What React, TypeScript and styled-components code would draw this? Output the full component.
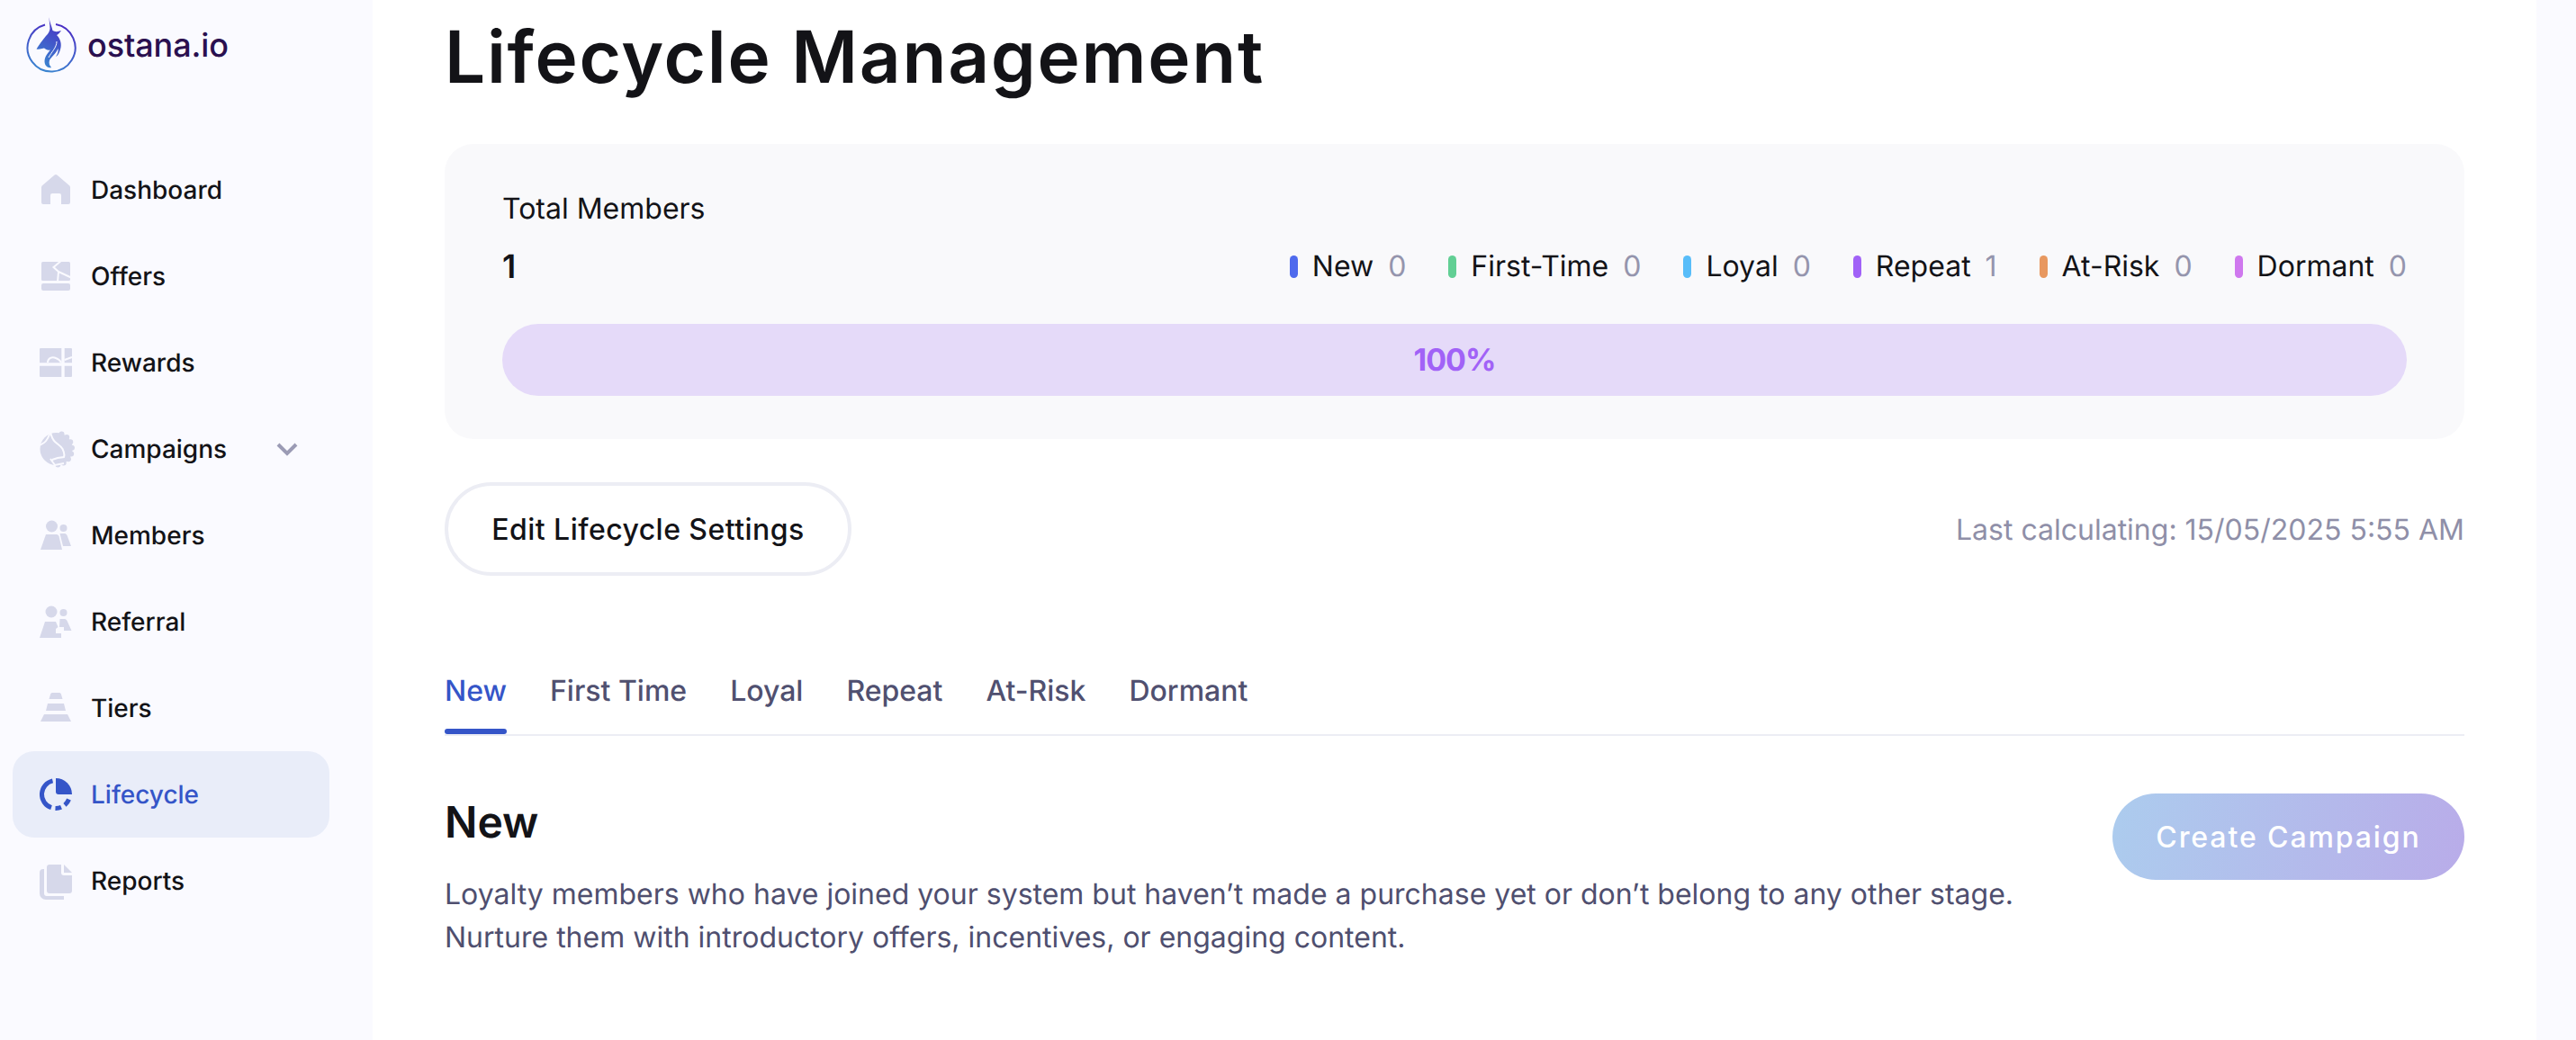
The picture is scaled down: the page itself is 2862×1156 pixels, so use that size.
import React from 'react';
import styled, { createGlobalStyle } from 'styled-components';

const GlobalStyle = createGlobalStyle`
  html, body {
    margin: 0;
    padding: 0;
    background: #fafaff;
    font-family: 'Inter', 'Liberation Sans', sans-serif;
    color: #131317;
    text-rendering: geometricPrecision;
  }
  * {
    box-sizing: border-box;
  }
`;

const Page = styled.div`
  display: flex;
  width: 2862px;
  height: 1156px;
  overflow: hidden;
  background: #fafaff;
`;

const Sidebar = styled.aside`
  flex: 0 0 414px;
  padding: 17px 0 0 14px;
`;

const Logo = styled.div`
  display: flex;
  align-items: flex-start;
  gap: 12px;
  height: 146px;
  padding-left: 15px;
`;

const LogoText = styled.span`
  margin-top: 10px;
  font-size: 36px;
  line-height: 46px;
  font-weight: 500;
  letter-spacing: -0.1px;
  color: #2a1050;
`;

const NavRow = styled.div<{ $active?: boolean }>`
  display: flex;
  align-items: center;
  gap: 21px;
  width: 352px;
  height: 96px;
  padding-left: 30px;
  border-radius: 24px;
  font-size: 28px;
  font-weight: 500;
  background: ${(p) => (p.$active ? '#e9edf9' : 'transparent')};
  color: ${(p) => (p.$active ? '#3555c8' : '#131317')};
`;

const NavIcon = styled.svg<{ $active?: boolean }>`
  flex: 0 0 36px;
  width: 36px;
  height: 36px;
  overflow: visible;
  fill: ${(p) => (p.$active ? '#3555c8' : '#d6d8ea')};
`;

const NavLabel = styled.span`
  line-height: 36px;
`;

const Chevron = styled.svg`
  width: 24px;
  height: 16px;
  margin-left: 34px;
  fill: none;
  stroke: #9b9bb5;
  stroke-width: 4;
`;

const Cut = styled.path`
  fill: none;
  stroke: #fafaff;
  stroke-width: 2;
`;

const Main = styled.main`
  flex: 0 0 2404px;
  padding: 8px 80px 0;
  background: #fff;
`;

const Title = styled.h1`
  margin: 0;
  font-size: 80px;
  line-height: 112px;
  font-weight: 600;
  letter-spacing: 1.7px;
  color: #131317;
`;

const SummaryCard = styled.section`
  margin-top: 40px;
  padding: 48px 64px;
  height: 328px;
  border-radius: 32px;
  background: #f9f9fb;
`;

const TotalLabel = styled.div`
  font-size: 32px;
  line-height: 48px;
`;

const TotalRow = styled.div`
  display: flex;
  align-items: center;
  justify-content: space-between;
  height: 48px;
  margin-top: 16px;
`;

const TotalValue = styled.div`
  font-size: 36px;
  font-weight: 600;
`;

const Legend = styled.div`
  display: flex;
  gap: 47px;
`;

const LegendItem = styled.div`
  display: flex;
  align-items: center;
  gap: 16px;
  font-size: 32px;
  line-height: 48px;
`;

const LegendMark = styled.i<{ $color: string }>`
  width: 9px;
  height: 25px;
  border-radius: 5px;
  background: ${(p) => p.$color};
`;

const LegendCount = styled.span`
  color: #9595ad;
`;

const Bar = styled.div`
  display: flex;
  align-items: center;
  justify-content: center;
  height: 80px;
  margin-top: 40px;
  border-radius: 40px;
  background: #e5daf9;
  font-size: 34px;
  font-weight: 700;
  letter-spacing: -1px;
  color: #a162f7;
`;

const Actions = styled.div`
  display: flex;
  align-items: center;
  justify-content: space-between;
  margin-top: 48px;
`;

const OutlineButton = styled.button`
  width: 452px;
  height: 104px;
  border: 4px solid #ecedf4;
  border-radius: 52px;
  background: #fff;
  font-family: inherit;
  font-size: 32px;
  font-weight: 500;
  letter-spacing: 0.45px;
  color: #131317;
`;

const Calculated = styled.span`
  font-size: 32px;
  color: #8f8fa8;
`;

const Tabs = styled.nav`
  display: flex;
  gap: 48px;
  height: 98px;
  margin-top: 80px;
  padding-top: 24px;
  border-bottom: 2px solid #ecedf4;
`;

const Tab = styled.div<{ $active?: boolean }>`
  position: relative;
  height: 72px;
  font-size: 32px;
  font-weight: 500;
  line-height: 48px;
  color: ${(p) => (p.$active ? '#3555c8' : '#505070')};

  ${(p) =>
    p.$active &&
    `&::after {
      content: '';
      position: absolute;
      left: 0;
      right: 0;
      bottom: 0;
      height: 6px;
      border-radius: 3px;
      background: #3555c8;
    }`}
`;

const Stage = styled.section`
  display: flex;
  align-items: flex-start;
  justify-content: space-between;
  margin-top: 64px;
`;

const StageHeading = styled.h2`
  margin: 0;
  font-size: 48px;
  line-height: 64px;
  font-weight: 600;
`;

const StageText = styled.p`
  margin: 24px 0 0;
  font-size: 32px;
  line-height: 48px;
  color: #4f4f6f;
`;

const PrimaryButton = styled.button`
  width: 391px;
  height: 96px;
  border: 0;
  border-radius: 48px;
  background: linear-gradient(100deg, #acccee 0%, #b9ace9 100%);
  font-family: inherit;
  font-size: 32px;
  font-weight: 500;
  letter-spacing: 1.9px;
  color: #fff;
`;

const LogoMark = () => (
  <svg width="56" height="64" viewBox="0 0 56 64" style={{ flex: '0 0 56px' }}>
    <defs>
      <linearGradient id="logoFill" x1="0.6" y1="0" x2="0.3" y2="1">
        <stop offset="0" stopColor="#4a2fc4" />
        <stop offset="1" stopColor="#3a86d0" />
      </linearGradient>
    </defs>
    <path
      d="M33 10A26.500 26.500 0 1 1 21 10.500"
      fill="none"
      stroke="url(#logoFill)"
      strokeWidth="2"
    />
    <path
      fill="url(#logoFill)"
      d="M26 0C25 6 28 10 29.500 17C32 18.500 35 18.500 39 17C37 20 35 21.500 34 22C38 26 40 32 38 38C37 42 35 45 33 46C35 43 36 40 35.500 37C33 43 28 46 26 50C25 53 26 56 28 58C24 59 20.500 56 20.500 51C20.500 46 24 42 27 38.500C24 39.500 22 38 20 36.500C17 37.500 14 38 11.500 37.500C14 33 19 27 22 23C25 20 26 18 26.500 15C26.500 10 25 5 26 0Z"
    />
    <path d="M34 29C34 36 28 41 25 47" fill="none" stroke="#fafaff" strokeWidth="1" />
  </svg>
);

// little bumps along the right side of the campaigns badge
const badgeBumps = [-70, -48, -26, -4, 18, 40, 62, 84];

const navItems: { label: string; active?: boolean; chevron?: boolean; icon: React.ReactNode }[] = [
  {
    label: 'Dashboard',
    icon: (
      <path d="M16.600 1.600a2 2 0 0 1 2.800 0l12.800 11a3 3 0 0 1 1.800 3V32a2 2 0 0 1-2 2H24V24a2 2 0 0 0-2-2h-8a2 2 0 0 0-2 2v10H4a2 2 0 0 1-2-2V15.600a3 3 0 0 1 1.800-3z" />
    ),
  },
  {
    label: 'Offers',
    icon: (
      <>
        <rect x="2" y="2" width="32" height="21" rx="1.500" />
        <rect x="2" y="26" width="32" height="8" rx="2" />
        <Cut d="M25 0L15.500 8L21 13L20 24M21 13L36 20" />
      </>
    ),
  },
  {
    label: 'Rewards',
    icon: (
      <>
        <path d="M1 2H24.300V18.300H0V3a1 1 0 0 1 1-1z" />
        <path d="M27.700 2H35a1 1 0 0 1 1 1V18.300H27.700z" />
        <path d="M0 21.700H24.300V34H1a1 1 0 0 1-1-1z" />
        <path d="M27.700 21.700H36V33a1 1 0 0 1-1 1H27.700z" />
        <Cut d="M9 18C9 13 14 11 18 13C21 14 23 16 24 18M27.700 15L36 12" />
      </>
    ),
  },
  {
    label: 'Campaigns',
    chevron: true,
    icon: (
      <>
        <circle cx="18.500" cy="18" r="18" />
        {badgeBumps.map((deg) => (
          <circle
            key={deg}
            cx={18.5 + 17.5 * Math.cos((deg * Math.PI) / 180)}
            cy={18 + 17.5 * Math.sin((deg * Math.PI) / 180)}
            r="3"
          />
        ))}
        <Cut d="M-3 16L5 11C8 9 10 5 12 -1C13 4 15 8 17 10C20 13 24 15 25.500 18C27 21 28 24 27 27L20 28L14 30M12 29L17 36L27 34" />
      </>
    ),
  },
  {
    label: 'Members',
    icon: (
      <>
        <circle cx="13.500" cy="8" r="6.500" />
        <circle cx="26.500" cy="10" r="4" />
        <path d="M7 17H19C20 17 21 18 21.500 19L25 34H1z" />
        <path d="M22.500 16H28C29 16 30 17 30.500 18L35 30H26z" />
      </>
    ),
  },
  {
    label: 'Referral',
    icon: (
      <>
        <circle cx="13" cy="7" r="6.500" />
        <circle cx="26.500" cy="8" r="4" />
        <path d="M6 18H18L20.500 24L18 26V31H24V36H0z" />
        <path d="M22.500 15H28C29 15 30 16 30.500 17L35.500 28H27V24H22z" />
      </>
    ),
  },
  {
    label: 'Tiers',
    icon: (
      <>
        <path d="M14 1H22C23 1 24 2 24 3L25.500 8H10.500L12 3C12 2 13 1 14 1z" />
        <path d="M9 13H27L29 21H7z" />
        <path d="M5 25H31L35 33H1z" />
      </>
    ),
  },
  {
    label: 'Lifecycle',
    active: true,
    icon: (
      <>
        <path d="M18 0A18 18 0 0 1 36 18H21a3 3 0 0 1-3-3z" />
        <path d="M14.500 2.900A15.500 15.500 0 0 0 13 32.700" fill="none" stroke="#3555c8" strokeWidth="5" />
        <path d="M17.500 33.500A15.500 15.500 0 0 0 24 32.300" fill="none" stroke="#3555c8" strokeWidth="5" />
        <path d="M28 29.800A15.500 15.500 0 0 0 32.500 23.500" fill="none" stroke="#3555c8" strokeWidth="5" />
      </>
    ),
  },
  {
    label: 'Reports',
    icon: (
      <>
        <path d="M11 0H24V9a3 3 0 0 0 3 3h9V29a3 3 0 0 1-3 3H11a3 3 0 0 1-3-3V3a3 3 0 0 1 3-3z" />
        <path d="M27 0L36 9H27z" />
        <path d="M5 5V32a3 3 0 0 0 3 3H27v4H7a7 7 0 0 1-7-7V9a4 4 0 0 1 4-4z" />
      </>
    ),
  },
];

const legendItems = [
  { label: 'New', count: 0, color: '#4f6aed' },
  { label: 'First-Time', count: 0, color: '#62cf94' },
  { label: 'Loyal', count: 0, color: '#58bdf9' },
  { label: 'Repeat', count: 1, color: '#a162f7' },
  { label: 'At-Risk', count: 0, color: '#e8985f' },
  { label: 'Dormant', count: 0, color: '#cf78ee' },
];

const tabs = ['New', 'First Time', 'Loyal', 'Repeat', 'At-Risk', 'Dormant'];

export default function App() {
  return (
    <>
      <GlobalStyle />
      <Page>
        <Sidebar>
          <Logo>
            <LogoMark />
            <LogoText>ostana.io</LogoText>
          </Logo>
          {navItems.map((item) => (
            <NavRow key={item.label} $active={item.active}>
              <NavIcon viewBox="0 0 36 36" $active={item.active}>
                {item.icon}
              </NavIcon>
              <NavLabel>{item.label}</NavLabel>
              {item.chevron && (
                <Chevron viewBox="0 0 24 16">
                  <path d="M2 3l10 10L22 3" />
                </Chevron>
              )}
            </NavRow>
          ))}
        </Sidebar>
        <Main>
          <Title>Lifecycle Management</Title>
          <SummaryCard>
            <TotalLabel>Total Members</TotalLabel>
            <TotalRow>
              <TotalValue>1</TotalValue>
              <Legend>
                {legendItems.map((item) => (
                  <LegendItem key={item.label}>
                    <LegendMark $color={item.color} />
                    <span>{item.label}</span>
                    <LegendCount>{item.count}</LegendCount>
                  </LegendItem>
                ))}
              </Legend>
            </TotalRow>
            <Bar>100%</Bar>
          </SummaryCard>
          <Actions>
            <OutlineButton>Edit Lifecycle Settings</OutlineButton>
            <Calculated>Last calculating: 15/05/2025 5:55 AM</Calculated>
          </Actions>
          <Tabs>
            {tabs.map((tab, i) => (
              <Tab key={tab} $active={i === 0}>
                {tab}
              </Tab>
            ))}
          </Tabs>
          <Stage>
            <div>
              <StageHeading>New</StageHeading>
              <StageText>
                Loyalty members who have joined your system but haven’t made a purchase yet or don’t belong to any other stage.
                <br />
                Nurture them with introductory offers, incentives, or engaging content.
              </StageText>
            </div>
            <PrimaryButton>Create Campaign</PrimaryButton>
          </Stage>
        </Main>
      </Page>
    </>
  );
}
